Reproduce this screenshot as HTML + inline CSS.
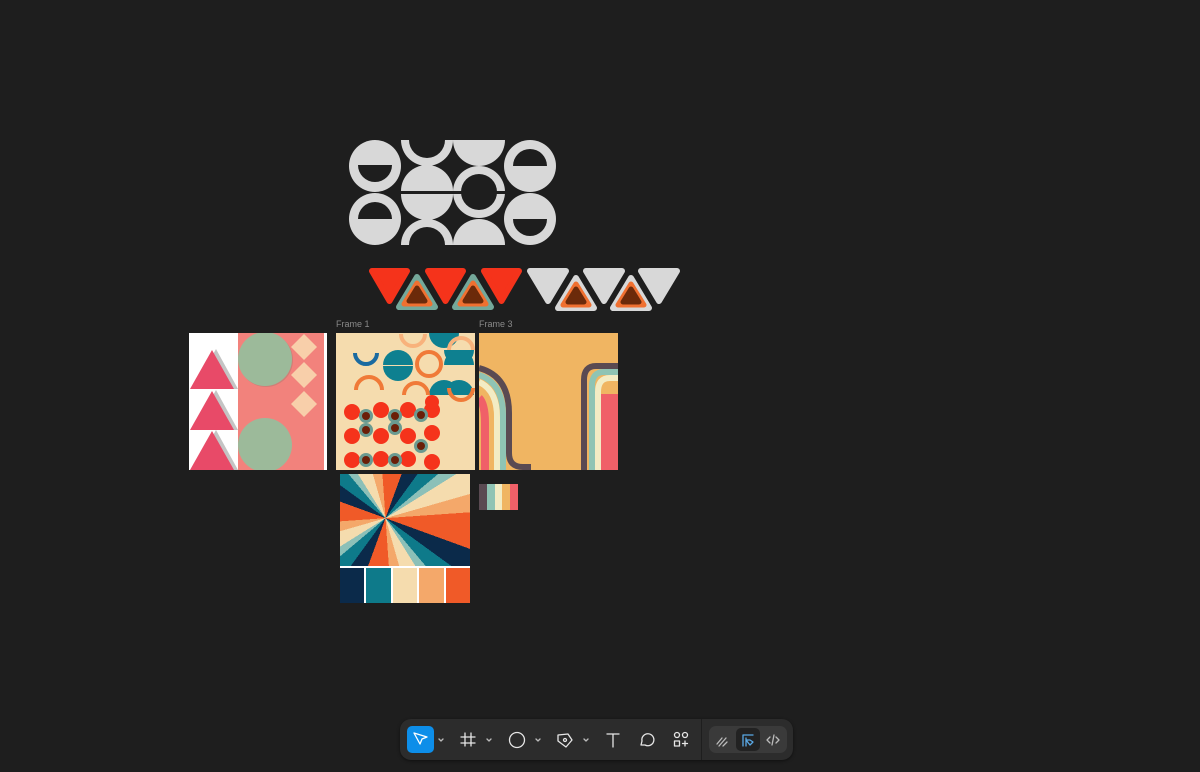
<!DOCTYPE html>
<html><head><meta charset="utf-8"><style>
html,body{margin:0;padding:0;width:1200px;height:772px;background:#1e1e1e;overflow:hidden;font-family:"Liberation Sans",sans-serif}
.abs{position:absolute}
.lbl{position:absolute;font-size:9px;color:#8a8a8a}
</style></head><body>

<svg class="abs" style="left:0;top:0" width="1200" height="772">
<defs>
 <clipPath id="f1"><rect x="336" y="333" width="139" height="137"/></clipPath>
 <clipPath id="f0"><rect x="189" y="333" width="138" height="137"/></clipPath>
 <clipPath id="f3"><rect x="479" y="333" width="139" height="137"/></clipPath>
</defs>
<g fill="#d8d8d8">
 <circle cx="375" cy="166" r="26"/><path d="M358 165 h34 a17 17 0 0 1 -34 0z" fill="#1e1e1e"/>
 <circle cx="375" cy="219" r="26"/><path d="M358 219 h34 a17 17 0 0 0 -34 0z" fill="#1e1e1e"/>
 <path d="M401 140 h52 a26 26 0 0 1 -52 0z"/><path d="M409 140 h36 a18 18 0 0 1 -36 0z" fill="#1e1e1e"/>
 <path d="M401 191 a26 26 0 0 1 52 0z"/>
 <path d="M401 194 h52 a26 26 0 0 1 -52 0z"/>
 <path d="M401 245 a26 26 0 0 1 52 0z"/><path d="M409 245 a18 18 0 0 1 36 0z" fill="#1e1e1e"/>
 <path d="M453 140 h52 a26 26 0 0 1 -52 0z"/>
 <circle cx="479" cy="192" r="26"/><circle cx="479" cy="192" r="18" fill="#1e1e1e"/>
 <rect x="453" y="191" width="52" height="3" fill="#1e1e1e"/>
 <path d="M453 245 a26 26 0 0 1 52 0z"/>
 <circle cx="530" cy="166" r="26"/><path d="M513 166 h34 a17 17 0 0 0 -34 0z" fill="#1e1e1e"/>
 <circle cx="530" cy="219" r="26"/><path d="M513 219 h34 a17 17 0 0 1 -34 0z" fill="#1e1e1e"/>
</g>
<g stroke-linejoin="round">
 <g fill="#f5331b" stroke="#f5331b" stroke-width="6">
  <path d="M372 271 h35 l-17.5 30z"/><path d="M428 271 h35 l-17.5 30z"/><path d="M484 271 h35 l-17.5 30z"/>
 </g>
 <g fill="#74a89a" stroke="#74a89a" stroke-width="6"><path d="M417 277 l-18 30 h36z"/><path d="M473 277 l-18 30 h36z"/></g>
 <g fill="#f07030" stroke="#f07030" stroke-width="5"><path d="M417 283 l-13 21 h26z"/><path d="M473 283 l-13 21 h26z"/></g>
 <g fill="#6b2a0a" stroke="#6b2a0a" stroke-width="5"><path d="M417 288 l-8 13 h16z"/><path d="M473 288 l-8 13 h16z"/></g>
 <g fill="#d8d8d8" stroke="#d8d8d8" stroke-width="6">
  <path d="M530 271 h36 l-18 30z"/><path d="M586 271 h36 l-18 30z"/><path d="M641 271 h36 l-18 30z"/>
  <path d="M576 278 l-18 30 h36z"/><path d="M631 278 l-18 30 h36z"/>
 </g>
 <g fill="#f07030" stroke="#f07030" stroke-width="5"><path d="M576 284 l-13 21 h26z"/><path d="M631 284 l-13 21 h26z"/></g>
 <g fill="#6b2a0a" stroke="#6b2a0a" stroke-width="5"><path d="M576 289 l-8 13 h16z"/><path d="M631 289 l-8 13 h16z"/></g>
</g>

<!-- left frame -->
<g clip-path="url(#f0)">
<rect x="189" y="333" width="138" height="137" fill="#fff"/>
<g fill="#c4c4c4"><path d="M216 349 l22 40 h-44z"/><path d="M216 390 l22 40 h-44z"/><path d="M216 430 l22 40 h-44z"/></g>
<rect x="238" y="333" width="86" height="137" fill="#f2827c"/>
<g fill="#e84a68"><path d="M212 350 l22 39 h-44z"/><path d="M212 391 l22 39 h-44z"/><path d="M212 431 l22 39 h-44z"/></g>
<circle cx="266" cy="360" r="27" fill="#b07a70" opacity=".5"/><circle cx="265" cy="359" r="27" fill="#9cba9a"/>
<circle cx="265" cy="445" r="27" fill="#9cba9a"/>
<g fill="#f8cfaa"><path d="M304 334 l13 13 -13 13 -13 -13z"/><path d="M304 362 l13 13 -13 13 -13 -13z"/><path d="M304 391 l13 13 -13 13 -13 -13z"/></g>
</g>

<!-- frame 1 -->
<g clip-path="url(#f1)">
<rect x="336" y="333" width="139" height="137" fill="#f5dcae"/>
<g fill="#0e8090">
 <path d="M429 333 h30 a15 15 0 0 1 -30 0z"/><path d="M383 365 a15 15 0 0 1 30 0z"/><path d="M383 366 h30 a15 15 0 0 1 -30 0z"/>
 <path d="M444 365 a15 15 0 0 1 30 0z"/><path d="M444 350 h30 a15 15 0 0 1 -30 0z"/>
 <path d="M444 395 h30 a15 15 0 0 0 -30 0z"/>
 <path d="M429 395 a15 15 0 0 1 30 0z"/>
</g>
<g fill="none" stroke-width="4">
 <path d="M355 353 a11 11 0 0 0 22 0" stroke="#1a6aa0"/>
 <path d="M401 334 a12 12 0 0 0 24 0" stroke="#f8b27c"/>
 <path d="M356 390 a13 13 0 0 1 26 0" stroke="#f07a38"/>
 <circle cx="429" cy="364" r="12" stroke="#f07a38"/>
 <path d="M404 395 a12 12 0 0 1 24 0" stroke="#f07a38"/>
 <path d="M449 388 a12 12 0 0 0 24 0" stroke="#f07a38"/>
 <path d="M449 350 a12 12 0 0 1 24 0" stroke="#f8b27c"/>
</g>
<g fill="#f5331b">
 <circle cx="352" cy="412" r="8"/><circle cx="381" cy="410" r="8"/><circle cx="408" cy="410" r="8"/><circle cx="432" cy="410" r="8"/><circle cx="432" cy="402" r="7"/>
 <circle cx="352" cy="436" r="8"/><circle cx="381" cy="436" r="8"/><circle cx="408" cy="436" r="8"/><circle cx="432" cy="433" r="8"/>
 <circle cx="352" cy="460" r="8"/><circle cx="381" cy="459" r="8"/><circle cx="408" cy="459" r="8"/><circle cx="432" cy="462" r="8"/>
</g>
<g fill="#6a9a90"><circle cx="366" cy="416" r="7"/><circle cx="395" cy="416" r="7"/><circle cx="366" cy="430" r="7"/><circle cx="395" cy="428" r="7"/><circle cx="421" cy="415" r="7"/><circle cx="366" cy="460" r="7"/><circle cx="395" cy="460" r="7"/><circle cx="421" cy="446" r="7"/></g>
<g fill="#6b1e08"><circle cx="366" cy="416" r="4"/><circle cx="395" cy="416" r="4"/><circle cx="366" cy="430" r="4"/><circle cx="395" cy="428" r="4"/><circle cx="421" cy="415" r="4"/><circle cx="366" cy="460" r="4"/><circle cx="395" cy="460" r="4"/><circle cx="421" cy="446" r="4"/></g>
</g>

<!-- frame 3 -->
<g clip-path="url(#f3)">
<rect x="479" y="333" width="139" height="137" fill="#f0b562"/>
<g fill="none" stroke-width="6">
 <path d="M479 368 q30 8 30 45 v40 q0 14 14 14 h8" stroke="#5a4a52"/>
 <path d="M479 375 q24 8 24 40 v55" stroke="#8fc4b4"/>
 <path d="M479 382 q18 8 18 35 v53" stroke="#f3ecc4"/>
 <path d="M479 389 q12 8 12 30 v51" stroke="#f0b562"/>
 <path d="M479 398 q6 6 6 25 v47" stroke="#f06068" stroke-width="8"/>
 <path d="M618 366 h-22 q-12 0 -12 14 v90" stroke="#5a4a52"/>
 <path d="M618 372 h-14 q-12 0 -12 14 v84" stroke="#8fc4b4"/>
 <path d="M618 378 h-8 q-12 0 -12 14 v78" stroke="#f3ecc4"/>
 <path d="M618 384 h-2 q-12 0 -12 14 v72" stroke="#f0b562"/>
</g>
<rect x="601" y="394" width="17" height="76" fill="#f06068"/>
</g>
</svg>

<div class="lbl" style="left:336px;top:319px">Frame 1</div>
<div class="lbl" style="left:479px;top:319px">Frame 3</div>

<div class="abs" style="left:340px;top:474px;width:130px;height:92px;background:repeating-conic-gradient(from 20deg at 35% 48%,#0b2a4a 0 16deg,#0e7a8a 16deg 30deg,#8cc0b8 30deg 38deg,#f5dcae 38deg 54deg,#f4a86a 54deg 66deg,#f05a28 66deg 90deg)"></div>
<div class="abs" style="left:340px;top:566px;width:130px;height:37px;background:#fff;display:flex;gap:2px;padding-top:2px;box-sizing:border-box">
 <div style="flex:1;background:#0b2a4a"></div><div style="flex:1;background:#0e7a8a"></div><div style="flex:1;background:#f5dcae"></div><div style="flex:1;background:#f4a86a"></div><div style="flex:1;background:#f05a28"></div>
</div>
<div class="abs" style="left:479px;top:484px;width:39px;height:26px;display:flex">
 <div style="flex:1;background:#5a4a52"></div><div style="flex:1;background:#8fc4b4"></div><div style="flex:1;background:#f3ecc4"></div><div style="flex:1;background:#f0b562"></div><div style="flex:1;background:#f06068"></div>
</div>

<div class="abs" style="left:400px;top:719px;width:393px;height:41px;background:#2c2c2c;border-radius:11px;box-shadow:0 1px 3px rgba(0,0,0,.5)"></div>
<div class="abs" style="left:407px;top:726px;width:27px;height:27px;background:#0d8ee9;border-radius:5px"></div>
<div class="abs" style="left:701px;top:719px;width:1px;height:41px;background:#1e1e1e"></div>
<div class="abs" style="left:709px;top:726px;width:78px;height:27px;background:#3a3a3a;border-radius:7px"></div>
<div class="abs" style="left:736px;top:728px;width:24px;height:23px;background:#222;border-radius:5px"></div>
<svg class="abs" style="left:0;top:0" width="1200" height="772" fill="none" stroke="#e6e6e6" stroke-width="1.3" stroke-linecap="round" stroke-linejoin="round">
 <path d="M414 733 l13 4 -5 2 -2 5z" stroke="#fff"/>
 <path d="M439 739 l2 2 2-2 M487 739 l2 2 2-2 M536 739 l2 2 2-2 M584 739 l2 2 2-2" stroke="#bbb"/>
 <path d="M465 733 v13 M471 733 v13 M461 737 h14 M461 743 h14"/>
 <circle cx="517" cy="740" r="7.5"/>
 <path d="M558 735 l10 -1 4 6 -6 7 -8 -6z"/><circle cx="565" cy="740" r="1.5"/>
 <path d="M607 734 h12 M613 734 v13"/>
 <path d="M641 745 l1-4 a6 6 0 1 1 3 4z"/>
 <circle cx="677" cy="735" r="2.5"/><circle cx="685" cy="735" r="2.5"/><rect x="674.5" y="741" width="5" height="5"/><path d="M685 741 v5 M682.5 743.5 h5"/>
 <path d="M717 744 l5-6 M719 746 l7-8 M723 746 l4-4" stroke="#bbb"/>
 <path d="M743 735 h10 M743 735 v11 M746 738 v8 M746 740 h4 l3 2 -3 3z" stroke="#5aa9e6"/>
 <path d="M770 737 l-3 3 3 3 M776 737 l3 3 -3 3 M774 735 l-2 10" stroke="#bbb"/>
</svg>
</body></html>
